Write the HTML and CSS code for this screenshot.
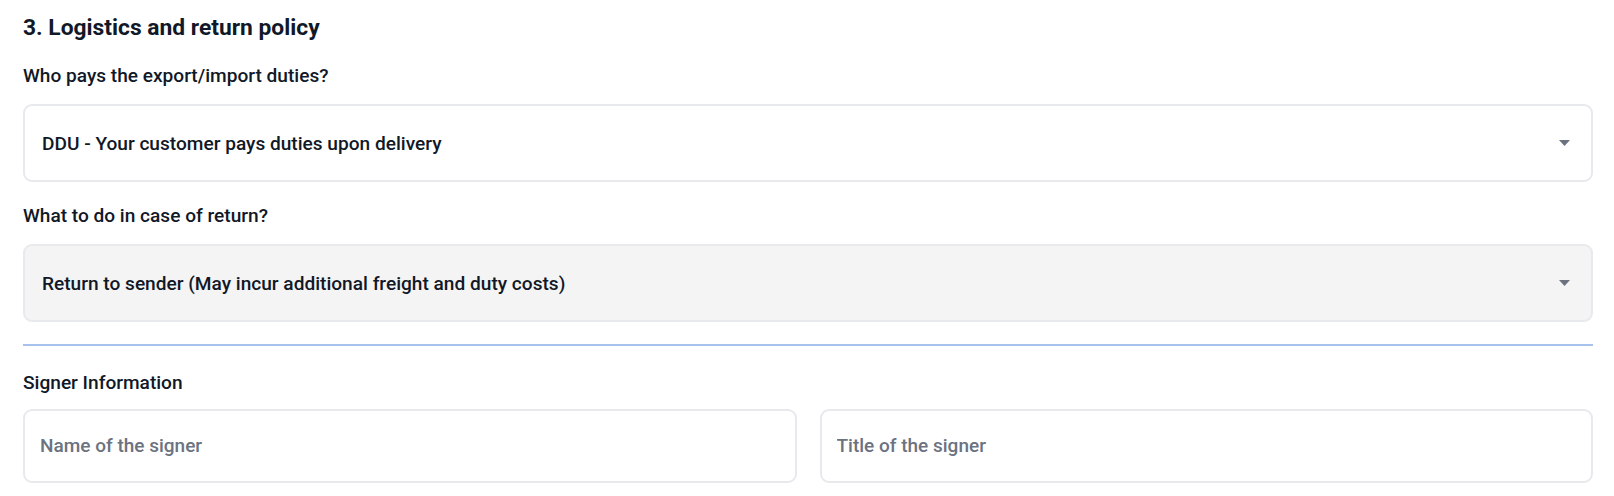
FILE: index.html
```html
<!DOCTYPE html>
<html lang="en">
<head>
<meta charset="utf-8">
<title>Logistics and return policy</title>
<link rel="stylesheet" href="styles.css">
</head>
<body>
<div class="page">
  <h2 class="section-title">3. Logistics and return policy</h2>

  <div class="field">
    <div class="field-label">Who pays the export/import duties?</div>
    <div class="select">
      <span class="select-value">DDU - Your customer pays duties upon delivery</span>
      <svg class="caret" width="11" height="6" viewBox="0 0 11 6"><path d="M0 0 H11 L5.5 6 Z"/></svg>
    </div>
  </div>

  <div class="field">
    <div class="field-label">What to do in case of return?</div>
    <div class="select select-muted">
      <span class="select-value">Return to sender (May incur additional freight and duty costs)</span>
      <svg class="caret" width="11" height="6" viewBox="0 0 11 6"><path d="M0 0 H11 L5.5 6 Z"/></svg>
    </div>
  </div>

  <hr class="divider">

  <div class="field-label signer-label">Signer Information</div>
  <div class="input-row">
    <input class="text-input" type="text" placeholder="Name of the signer">
    <input class="text-input" type="text" placeholder="Title of the signer">
  </div>
</div>
</body>
</html>
```

FILE: styles.css
```css
* { box-sizing: border-box; }

html, body {
  margin: 0;
  padding: 0;
  background: #ffffff;
}

body {
  font-family: Roboto, "Noto Sans", Arial, sans-serif;
  color: #111827;
}

.page {
  padding: 14px 21px 0 23px;
}

.section-title {
  margin: 0 0 22px;
  font-size: 22.8px;
  line-height: 28px;
  font-weight: 700;
  color: #111827;
}

.field {
  margin-bottom: 22px;
}

.field-label {
  font-size: 19.1px;
  line-height: 24px;
  font-weight: 500;
  color: #111827;
  margin-bottom: 16px;
}

.select {
  display: flex;
  align-items: center;
  height: 78px;
  padding: 0 21px 0 17px;
  border: 2px solid #e8e9ed;
  border-radius: 9px;
  background: #ffffff;
}

.select-muted {
  background: #f4f4f5;
}

.select-value {
  font-size: 19.1px;
  font-weight: 500;
  color: #111827;
}

.caret {
  margin-left: auto;
  fill: #6b7280;
  display: block;
}

.divider {
  border: 0;
  height: 1.5px;
  background: #a8c2ee;
  margin: 0 0 25px;
}

.signer-label {
  margin-bottom: 14px;
}

.input-row {
  display: grid;
  grid-template-columns: 1fr 1fr;
  gap: 23px;
}

.text-input {
  height: 74px;
  padding: 0 15px;
  border: 2px solid #e8e9ed;
  border-radius: 9px;
  background: #ffffff;
  font-family: Roboto, "Noto Sans", Arial, sans-serif;
  font-size: 19px;
  font-weight: 500;
  color: #111827;
  outline: none;
}

.text-input::placeholder {
  color: #6b7280;
  opacity: 1;
}
```
